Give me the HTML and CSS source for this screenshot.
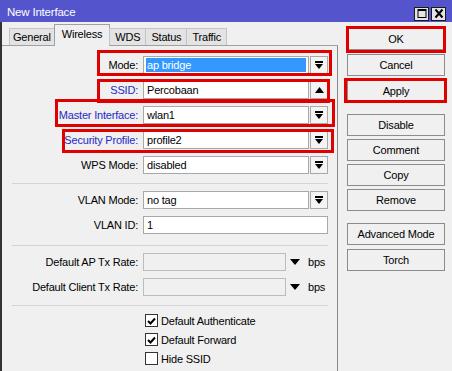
FILE: index.html
```html
<!DOCTYPE html>
<html>
<head>
<meta charset="utf-8">
<link rel="stylesheet" href="styles.css">
</head>
<body>
<div class="win">
  <div class="titlebar">
    <span class="title">New Interface</span>
    <div class="tbtns">
      <span class="tbtn"><svg width="12" height="11" viewBox="0 0 12 11"><rect x="2" y="1.5" width="8" height="8" fill="none" stroke="#000" stroke-width="1"/><rect x="2" y="1" width="8" height="2" fill="#000"/></svg></span>
      <span class="tbtn"><svg width="12" height="11" viewBox="0 0 12 11"><path d="M2.5 1.5 L9.5 9.5 M9.5 1.5 L2.5 9.5" stroke="#000" stroke-width="2"/></svg></span>
    </div>
  </div>
  <div class="main">
    <div class="left">
      <div class="tabs">
        <span class="tab gen">General</span>
        <span class="tab active">Wireless</span>
        <span class="tab">WDS</span>
        <span class="tab">Status</span>
        <span class="tab">Traffic</span>
      </div>
      <div class="panel">
        <div class="row top">
          <span class="lbl">Mode:</span>
          <div class="field">
            <span class="inp sel"><span class="hl">ap bridge</span></span>
            <span class="dd"><svg width="8" height="8" viewBox="0 0 8 8"><rect x="0" y="0" width="8" height="2" fill="#000"/><polygon points="0,3 8,3 4,8" fill="#000"/></svg></span>
          </div>
        </div>
        <div class="row">
          <span class="lbl blue">SSID:</span>
          <div class="field">
            <span class="inp">Percobaan</span>
            <span class="dd"><svg width="9" height="6" viewBox="0 0 9 6"><polygon points="0,6 9,6 4.5,0" fill="#000"/></svg></span>
          </div>
        </div>
        <div class="row">
          <span class="lbl blue">Master Interface:</span>
          <div class="field">
            <span class="inp">wlan1</span>
            <span class="dd"><svg width="8" height="8" viewBox="0 0 8 8"><rect x="0" y="0" width="8" height="2" fill="#000"/><polygon points="0,3 8,3 4,8" fill="#000"/></svg></span>
          </div>
        </div>
        <div class="row">
          <span class="lbl blue">Security Profile:</span>
          <div class="field">
            <span class="inp">profile2</span>
            <span class="dd"><svg width="8" height="8" viewBox="0 0 8 8"><rect x="0" y="0" width="8" height="2" fill="#000"/><polygon points="0,3 8,3 4,8" fill="#000"/></svg></span>
          </div>
        </div>
        <div class="row">
          <span class="lbl">WPS Mode:</span>
          <div class="field">
            <span class="inp">disabled</span>
            <span class="dd"><svg width="8" height="8" viewBox="0 0 8 8"><rect x="0" y="0" width="8" height="2" fill="#000"/><polygon points="0,3 8,3 4,8" fill="#000"/></svg></span>
          </div>
        </div>
        <div class="sep sep1"></div>
        <div class="row">
          <span class="lbl">VLAN Mode:</span>
          <div class="field">
            <span class="inp">no tag</span>
            <span class="dd"><svg width="8" height="8" viewBox="0 0 8 8"><rect x="0" y="0" width="8" height="2" fill="#000"/><polygon points="0,3 8,3 4,8" fill="#000"/></svg></span>
          </div>
        </div>
        <div class="row">
          <span class="lbl">VLAN ID:</span>
          <div class="field">
            <span class="inp">1</span>
          </div>
        </div>
        <div class="sep sep2"></div>
        <div class="row">
          <span class="lbl">Default AP Tx Rate:</span>
          <div class="field rate">
            <span class="inp dis"></span>
            <svg class="arr" width="10" height="6" viewBox="0 0 10 6"><polygon points="0,0 10,0 5,6" fill="#000"/></svg>
            <span class="unit">bps</span>
          </div>
        </div>
        <div class="row">
          <span class="lbl">Default Client Tx Rate:</span>
          <div class="field rate">
            <span class="inp dis"></span>
            <svg class="arr" width="10" height="6" viewBox="0 0 10 6"><polygon points="0,0 10,0 5,6" fill="#000"/></svg>
            <span class="unit">bps</span>
          </div>
        </div>
        <div class="sep sep3"></div>
        <div class="checks">
          <div class="chk"><span class="box"><svg width="9" height="8" viewBox="0 0 9 8"><path d="M1 4 L3.5 6.5 L8 1.5" fill="none" stroke="#000" stroke-width="2"/></svg></span>Default Authenticate</div>
          <div class="chk"><span class="box"><svg width="9" height="8" viewBox="0 0 9 8"><path d="M1 4 L3.5 6.5 L8 1.5" fill="none" stroke="#000" stroke-width="2"/></svg></span>Default Forward</div>
          <div class="chk"><span class="box"></span>Hide SSID</div>
        </div>
      </div>
    </div>
    <div class="buttons">
      <span class="btn">OK</span>
      <span class="btn">Cancel</span>
      <span class="btn">Apply</span>
      <span class="btn grp">Disable</span>
      <span class="btn tight">Comment</span>
      <span class="btn tight">Copy</span>
      <span class="btn tight">Remove</span>
      <span class="btn grp">Advanced Mode</span>
      <span class="btn">Torch</span>
    </div>
  </div>
  <div class="mark m-ok"></div>
  <div class="mark m-apply"></div>
  <div class="mark m-mode"></div>
  <div class="mark m-ssid"></div>
  <div class="mark m-master"></div>
  <div class="mark m-sec"></div>
</div>
</body>
</html>
```
FILE: styles.css
```css
* { box-sizing: border-box; }
html, body { margin: 0; padding: 0; }
body {
  font-family: "Liberation Sans", Arial, sans-serif;
  font-size: 11px;
  letter-spacing: -0.2px;
  color: #000;
  background: #f0f0f0;
}
.win {
  position: relative;
  width: 452px;
  height: 371px;
  overflow: hidden;
  background: #f0f0f0;
}
.titlebar {
  height: 22px;
  background: #5454cc;
  display: flex;
  align-items: center;
  justify-content: space-between;
  padding: 0 6px 0 7px;
  color: #fff;
}
.title { font-size: 11.5px; padding-top: 1px; }
.tbtns { display: flex; gap: 2px; padding-top: 5px; }
.tbtn {
  width: 15px;
  height: 14px;
  border: 1px solid #1a1a1a;
  background: #e4e4e4;
  display: flex;
  align-items: center;
  justify-content: center;
}
.main {
  display: flex;
  height: 349px;
  border-left: 2px solid #333;
}
.left {
  width: 336px;
  display: flex;
  flex-direction: column;
}
.tabs {
  display: flex;
  align-items: flex-end;
  height: 24px;
  padding-left: 7px;
  border-bottom: 1px solid #a0a0a0;
}
.tab {
  height: 17px;
  line-height: 16px;
  padding: 0 5px;
  background: #e3e3e3;
  border: 1px solid #c4c4c4;
  border-bottom: none;
  margin-right: -1px;
}
.tab.gen { padding: 0 3px; }
.tab.active {
  height: 22px;
  line-height: 18px;
  padding: 0 7px;
  background: #f0f0f0;
  border-color: #a0a0a0;
  margin-bottom: -1px;
}
.panel {
  flex: 1;
  border-right: 1px solid #8a8a8a;
}
.row {
  display: flex;
  align-items: center;
  height: 18px;
  margin-top: 7px;
}
.row.top { margin-top: 10px; }
.lbl {
  width: 136px;
  text-align: right;
  white-space: nowrap;
}
.lbl.blue { color: #2828c4; }
.field {
  margin-left: 5px;
  width: 185px;
  height: 18px;
  display: flex;
  gap: 1px;
}
.inp {
  flex: 1;
  height: 18px;
  background: #fff;
  border: 1px solid #a8a8a8;
  padding-left: 3px;
  line-height: 16px;
  white-space: nowrap;
  overflow: hidden;
}
.inp.sel { padding: 1px 2px 1px 2px; }
.hl {
  display: block;
  height: 14px;
  line-height: 14px;
  background: #3399ff;
  color: #fff;
  padding-left: 1px;
}
.inp.dis { background: #f0f0f0; border-color: #bcbcbc; flex: none; width: 143px; }
.dd {
  width: 18px;
  height: 18px;
  border: 1px solid #a8a8a8;
  background: #f4f4f4;
  display: flex;
  align-items: center;
  justify-content: center;
}
.field.rate { align-items: center; gap: 0; }
.arr { margin-left: 4px; }
.unit { margin-left: 8px; }
.sep {
  margin-left: 10px;
  width: 316px;
  border-top: 1px solid #d4d4d4;
}
.sep1 { margin-top: 9px; }
.sep2 { margin-top: 11px; }
.sep3 { margin-top: 9px; }
.checks { margin-top: 5px; }
.chk {
  display: flex;
  align-items: center;
  height: 19px;
  padding-left: 143px;
}
.box {
  width: 13px;
  height: 13px;
  border: 1px solid #333;
  background: #fff;
  margin-right: 3px;
  display: flex;
  align-items: center;
  justify-content: center;
}
.buttons {
  width: 114px;
  padding: 6px 0 0 9px;
  display: flex;
  flex-direction: column;
}
.btn {
  width: 98px;
  height: 22px;
  border: 1px solid #8c8c8c;
  background: #f0f0f0;
  display: flex;
  align-items: center;
  justify-content: center;
  margin-bottom: 4px;
}
.btn.grp { margin-top: 8px; }
.btn.tight { margin-top: -1px; }
.mark {
  position: absolute;
  border: 3px solid #e00000;
}
.m-ok { left: 346px; top: 26px; width: 100px; height: 27px; }
.m-apply { left: 344px; top: 78px; width: 103px; height: 25px; }
.m-mode { left: 97px; top: 50px; width: 235px; height: 26px; }
.m-ssid { left: 97px; top: 79px; width: 233px; height: 24px; }
.m-master { left: 55px; top: 99px; width: 280px; height: 28px; }
.m-sec { left: 62px; top: 129px; width: 272px; height: 24px; }
```
